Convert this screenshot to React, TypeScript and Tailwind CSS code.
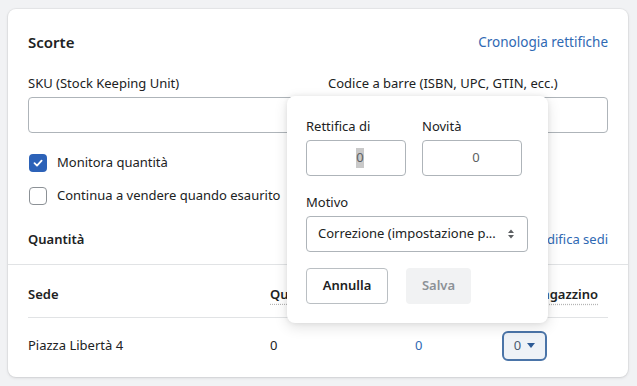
import React from "react";

const link = "text-[#2f69b3]";

function Checkbox({ checked }: { checked: boolean }) {
  return checked ? (
    <div className="w-[18px] h-[18px] rounded-[4px] bg-[#2c62b8] flex items-center justify-center">
      <svg width="12" height="12" viewBox="0 0 12 12" fill="none">
        <path d="M2.5 6.2 L5 8.6 L9.6 3.6" stroke="white" strokeWidth="1.8" strokeLinecap="round" strokeLinejoin="round" />
      </svg>
    </div>
  ) : (
    <div className="w-[18px] h-[18px] rounded-[4px] border border-[#8c9196] bg-white" />
  );
}

export default function App() {
  return (
    <div
      className="w-[637px] h-[386px] bg-[#f1f2f4] pt-[9px] pl-[8px] text-[13px] text-[#202223]"
      style={{ fontFamily: '"Noto Sans", sans-serif' }}
    >
      <div className="relative w-[620px] h-[368px] bg-white rounded-[8px] shadow-[0_0_0_1px_rgba(63,63,68,0.05),0_1px_3px_rgba(63,63,68,0.15)]">
        <div className="px-[20px]">
          <div className="h-[66px] flex items-center justify-between">
            <div className="font-semibold text-[15px]">Scorte</div>
            <div className={`${link} text-[13.5px]`}>Cronologia rettifiche</div>
          </div>
          <div className="flex gap-[20px]">
            <div className="flex-1">
              <div className="h-[16px] leading-[16px] mb-[6px]">SKU (Stock Keeping Unit)</div>
              <div className="h-[36px] border border-[#aeb4b9] rounded-[4px]" />
            </div>
            <div className="flex-1">
              <div className="h-[16px] leading-[16px] mb-[6px]">Codice a barre (ISBN, UPC, GTIN, ecc.)</div>
              <div className="h-[36px] border border-[#aeb4b9] rounded-[4px]" />
            </div>
          </div>
          <div className="mt-[20px] flex items-center gap-[10px] h-[20px] pl-[1px]">
            <Checkbox checked />
            <span>Monitora quantità</span>
          </div>
          <div className="mt-[13px] flex items-center gap-[10px] h-[20px] pl-[1px]">
            <Checkbox checked={false} />
            <span>Continua a vendere quando esaurito</span>
          </div>
          <div className="h-[48px] mt-[10px] flex items-center justify-between">
            <div className="font-semibold">Quantità</div>
            <div className={link}>Modifica sedi</div>
          </div>
        </div>
        <div className="h-px bg-[#e1e3e5]" />
        <div className="px-[20px]">
          <div className="h-[53px] pt-[8px] flex items-center border-b border-[#e1e3e5] font-semibold">
            <div className="w-[242px]">Sede</div>
            <div className="w-[145px] whitespace-nowrap overflow-hidden">
              <span className="underline decoration-dotted decoration-[#b5b5b5] underline-offset-[5px]">Quantità</span>
            </div>
            <div className="w-[87px] whitespace-nowrap overflow-hidden">
              <span className="underline decoration-dotted decoration-[#b5b5b5] underline-offset-[5px]">Impegn.</span>
            </div>
            <div className="flex-1 text-right pr-[10px] whitespace-nowrap">
              <span className="underline decoration-dotted decoration-[#b5b5b5] underline-offset-[5px]">In magazzino</span>
            </div>
          </div>
          <div className="h-[60px] pb-[5px] flex items-center">
            <div className="w-[242px]">Piazza Libertà 4</div>
            <div className="w-[145px]">0</div>
            <div className={`w-[87px] ${link}`}>0</div>
            <div className="flex-1">
              <div className="w-[45px] h-[30px] rounded-[6px] border-2 border-[#4a74a8] bg-[#eef2f7] flex items-center justify-center gap-[6px] text-[#4a5b70]">
                <span>0</span>
                <svg width="8" height="5" viewBox="0 0 8 5"><path d="M0 0 L8 0 L4 5 Z" fill="#2c5a96" /></svg>
              </div>
            </div>
          </div>
        </div>

        {/* Popover */}
        <div className="absolute left-[279px] top-[87px] w-[261px] h-[227px] bg-white rounded-[8px] shadow-[0_0_5px_rgba(23,24,24,0.08),0_4px_14px_rgba(0,0,0,0.12)] px-[19px] pt-[20px]">
          <div className="flex gap-[16px]">
            <div className="w-[100px]">
              <div className="h-[20px] leading-[20px] mb-[4px]">Rettifica di</div>
              <div className="h-[36px] border border-[#aeb4b9] rounded-[4px] flex items-center justify-center pl-[8px] text-[#5c5f62]">
                <span className="bg-[#c9c9c9]">0</span>
              </div>
            </div>
            <div className="w-[100px]">
              <div className="h-[20px] leading-[20px] mb-[4px]">Novità</div>
              <div className="h-[36px] border border-[#aeb4b9] rounded-[4px] flex items-center justify-center pl-[8px] text-[#5c5f62]">
                0
              </div>
            </div>
          </div>
          <div className="mt-[16px] h-[20px] leading-[20px] mb-[4px]">Motivo</div>
          <div className="w-[222px] h-[36px] border border-[#aeb4b9] rounded-[4px] flex items-center justify-between pl-[11px] pr-[12px]">
            <span className="whitespace-nowrap">Correzione (impostazione p...</span>
            <svg width="8" height="12" viewBox="0 0 8 12" className="shrink-0">
              <path d="M4 1.5 L7 5 L1 5 Z" fill="#5c5f62" />
              <path d="M4 10.5 L7 7 L1 7 Z" fill="#5c5f62" />
            </svg>
          </div>
          <div className="mt-[16px] flex gap-[18px]">
            <div className="w-[82px] h-[36px] border border-[#babfc3] rounded-[4px] flex items-center justify-center font-semibold">
              Annulla
            </div>
            <div className="w-[65px] h-[36px] rounded-[4px] bg-[#f1f2f3] flex items-center justify-center font-semibold text-[#8c9196]">
              Salva
            </div>
          </div>
        </div>
      </div>
    </div>
  );
}
